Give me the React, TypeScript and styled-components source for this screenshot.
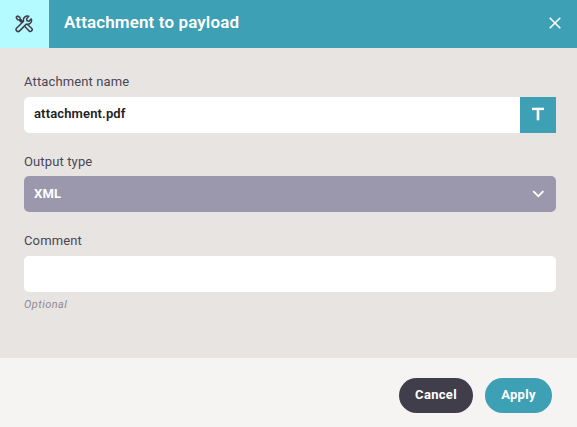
import React from "react";
import styled, { createGlobalStyle } from "styled-components";

const GlobalStyle = createGlobalStyle`
  *, *::before, *::after { box-sizing: border-box; }
  body { margin: 0; font-family: Roboto, "Liberation Sans", sans-serif; overflow: hidden; }
  input, button { font-family: inherit; }
`;

const Dialog = styled.section`
  display: flex;
  flex-direction: column;
  width: 577px;
  height: 427px;
  background: #e8e4e1;
`;

const Header = styled.header`
  display: flex;
  flex: 0 0 48px;
  background: #3da0b4;
  color: #fff;
`;

const HeaderIcon = styled.div`
  display: flex;
  align-items: center;
  justify-content: center;
  width: 49px;
  padding: 0 1px 1px 0;
  background: #b3fbff;
  color: #413e4c;
`;

const Title = styled.h1`
  flex: 1;
  margin: 0;
  padding-left: 15px;
  font-size: 17px;
  font-weight: 600;
  line-height: 44px;
  letter-spacing: 0.12px;
`;

const CloseButton = styled.button`
  display: flex;
  align-items: center;
  justify-content: center;
  width: 44px;
  padding: 0 0 2px;
  border: 0;
  background: none;
  color: inherit;
`;

const Form = styled.div`
  display: flex;
  flex: 1;
  flex-direction: column;
  padding: 24px 21px 0 24px;
`;

const Field = styled.div<{ $height: number }>`
  height: ${(p) => p.$height}px;
`;

const Label = styled.label<{ $height?: number }>`
  display: block;
  height: ${(p) => p.$height ?? 25}px;
  color: #4a4655;
  font-size: 13px;
  line-height: 20px;
  letter-spacing: 0.13px;
`;

const InputRow = styled.div`
  display: flex;
  height: 36px;
`;

const TextInput = styled.input<{ $joined?: boolean }>`
  flex: 1;
  min-width: 0;
  padding: 0 10px 3px;
  border: 0;
  border-radius: ${(p) => (p.$joined ? "5px 0 0 5px" : "5px")};
  background: #fff;
  color: #222;
  font-size: 13px;
  font-weight: 600;
  letter-spacing: 0.14px;
  outline: none;
`;

const TypeButton = styled.button`
  display: flex;
  align-items: center;
  justify-content: center;
  width: 36px;
  padding: 0 0 2px;
  border: 0;
  background: #3da0b4;
`;

const Select = styled.button`
  display: flex;
  align-items: center;
  justify-content: space-between;
  width: 100%;
  height: 36px;
  padding: 0 11px 0 10px;
  border: 0;
  border-radius: 5px;
  background: #9b98ad;
  color: #fff;
  font-size: 13px;
  font-weight: 700;
  letter-spacing: 0.14px;
`;

const SelectedValue = styled.span`
  padding-bottom: 2px;
`;

const Hint = styled.div`
  margin-top: 5px;
  color: #8f8b93;
  font-size: 11px;
  font-style: italic;
  line-height: 15px;
  letter-spacing: 0.45px;
`;

const Footer = styled.footer`
  display: flex;
  flex: 0 0 69px;
  align-items: flex-start;
  justify-content: flex-end;
  gap: 12px;
  padding: 20px 25px 0 0;
  background: #f5f4f2;
`;

const PillButton = styled.button<{ $primary?: boolean }>`
  width: ${(p) => (p.$primary ? 67 : 74)}px;
  height: 35px;
  padding: 0 0 2px;
  border: 0;
  border-radius: 18px;
  background: ${(p) => (p.$primary ? "#3da0b4" : "#413e4c")};
  color: #fff;
  font-size: 13px;
  font-weight: 700;
  letter-spacing: 0.3px;
`;

const ToolsIcon = () => (
  <svg width="18" height="18" viewBox="0 0 18 18" fill="none" stroke="currentColor" strokeWidth="1.5" strokeLinejoin="round" strokeLinecap="round">
    <path d="M1.2 2.3 2.5 1l2.4 1.3.4 1.8 2 2M1.2 2.3l1.3 2.4 1.8.4 2 2" />
    <path d="M13.8 1.3a4 4 0 0 0-5.2 5L1.7 13a1.9 1.9 0 0 0 2.9 2.9l6.7-6.8a4 4 0 0 0 5-5.2L14 6.2l-2-.4-.4-2z" />
    <path d="m10.1 11.7 4 4.2a1.8 1.8 0 0 0 2.5-2.6l-3.9-3.6" />
  </svg>
);

const CloseIcon = () => (
  <svg width="12" height="12" viewBox="0 0 12 12" stroke="currentColor" strokeWidth="1.6">
    <path d="m.7.7 10.6 10.6M11.3.7.7 11.3" />
  </svg>
);

const TypeIcon = () => (
  <svg width="12" height="14" viewBox="0 0 12 14" stroke="#fff" fill="none">
    <path d="M0 1.9h12" strokeWidth="2.4" />
    <path d="M6 1v12.3" strokeWidth="2.6" />
  </svg>
);

const ChevronIcon = () => (
  <svg width="13" height="8" viewBox="0 0 13 8" stroke="currentColor" fill="none" strokeWidth="1.8">
    <path d="m1.2 1.2 5.1 5 5.1-5" />
  </svg>
);

export default function App() {
  return (
    <>
      <GlobalStyle />
      <Dialog role="dialog" aria-label="Attachment to payload">
        <Header>
          <HeaderIcon><ToolsIcon /></HeaderIcon>
          <Title>Attachment to payload</Title>
          <CloseButton aria-label="Close"><CloseIcon /></CloseButton>
        </Header>
        <Form>
          <Field $height={80}>
            <Label htmlFor="name">Attachment name</Label>
            <InputRow>
              <TextInput id="name" $joined defaultValue="attachment.pdf" />
              <TypeButton aria-label="Text value"><TypeIcon /></TypeButton>
            </InputRow>
          </Field>
          <Field $height={79}>
            <Label $height={24}>Output type</Label>
            <Select><SelectedValue>XML</SelectedValue><ChevronIcon /></Select>
          </Field>
          <Field $height={85}>
            <Label htmlFor="comment">Comment</Label>
            <InputRow><TextInput id="comment" /></InputRow>
            <Hint>Optional</Hint>
          </Field>
        </Form>
        <Footer>
          <PillButton>Cancel</PillButton>
          <PillButton $primary>Apply</PillButton>
        </Footer>
      </Dialog>
    </>
  );
}
